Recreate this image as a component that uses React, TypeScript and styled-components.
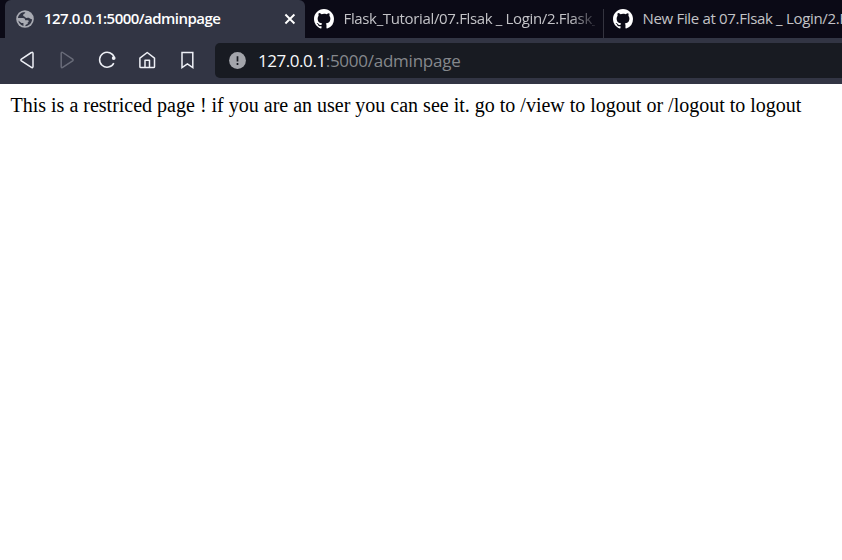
import React from "react";
import styled, { createGlobalStyle } from "styled-components";

const GlobalStyle = createGlobalStyle`
  * { box-sizing: border-box; }
  html, body { margin: 0; background: #fff; overflow: hidden; }
`;

const Browser = styled.div`
  width: 100%;
  height: 560px;
  display: flex;
  flex-direction: column;
  overflow: hidden;
  background: #fff;
  font-family: "Open Sans", "Noto Sans", sans-serif;
`;

const TabStrip = styled.div`
  display: flex;
  flex: 0 0 38px;
  padding-left: 5px;
  background: #0b0a16;
  overflow: hidden;
`;

const Tab = styled.div<{ $active?: boolean; $width: number }>`
  display: flex;
  align-items: center;
  flex: 0 0 ${(p) => p.$width}px;
  min-width: 0;
  padding: 0 8px 0 ${(p) => (p.$active ? 11 : 9)}px;
  background: ${(p) => (p.$active ? "#323544" : "transparent")};
  border-radius: 6px 6px 0 0;
`;

const TabTitle = styled.span<{ $active?: boolean; $fade?: boolean; $spacing: number }>`
  flex: 1;
  min-width: 0;
  margin-left: ${(p) => (p.$active ? 10 : 9.5)}px;
  padding-bottom: 2px;
  white-space: nowrap;
  font-size: 15px;
  line-height: 24px;
  font-weight: ${(p) => (p.$active ? 600 : 400)};
  letter-spacing: ${(p) => p.$spacing}px;
  color: ${(p) => (p.$active ? "#fff" : "#c3c3c7")};
  mask-image: ${(p) =>
    p.$fade ? "linear-gradient(to right, #000 calc(100% - 24px), transparent calc(100% + 4px))" : "none"};
`;

const TabDivider = styled.div`
  flex: 0 0 1px;
  margin-top: 9px;
  background: #34343f;
`;

const Toolbar = styled.div`
  display: flex;
  align-items: flex-start;
  flex: 0 0 46px;
  padding: 5px 0 0 17px;
  background: #323544;
`;

const NavButton = styled.button<{ $disabled?: boolean }>`
  display: flex;
  flex: 0 0 20px;
  height: 34px;
  margin: 0 20px 0 0;
  padding: 0;
  align-items: center;
  justify-content: center;
  border: 0;
  background: none;
  color: ${(p) => (p.$disabled ? "#696c79" : "#eef0f6")};
`;

const AddressBar = styled.div`
  display: flex;
  flex: 1;
  align-items: center;
  height: 35px;
  margin-left: -2px;
  padding-left: 14px;
  border-radius: 5px 0 0 5px;
  background: #181b22;
`;

const Address = styled.span`
  margin-left: 12px;
  white-space: nowrap;
  font-size: 17px;
  line-height: 26px;
  letter-spacing: -0.25px;
  color: #85888c;
`;

const Host = styled.span`
  color: #f7f8fa;
  letter-spacing: -0.45px;
`;

const PageText = styled.main`
  padding: 10px 10px 10px 10.5px;
  font-family: "Liberation Serif", serif;
  font-size: 20px;
  line-height: 23px;
  white-space: nowrap;
  color: #000;
`;

const Icon = styled.svg`
  display: block;
  flex: none;
`;

const GlobeIcon = () => (
  <Icon width="18" height="18" viewBox="0 0 18 18">
    <circle cx="9" cy="9" r="8.8" fill="#a9abb3" />
    <path
      d="M1.9 8.1 C2.3 5.3 4.2 3.1 7 2.3 C7.7 2.2 8.7 2.1 9.3 2.2 C9.2 3.8 7.1 3.5 7.1 5.2 C7.2 6.8 9 6.3 9.3 7.3 C9.6 8.8 12.2 7.4 13.2 7.9 C14.6 8.6 15 9.5 16.1 9.1 C16 13 13 16.1 9.5 16.2 L9.4 14.7 C12 14.4 11.9 13.4 11.9 12.3 L9.3 12.2 C8.6 10.5 8.8 9.5 7.4 9.3 L4.1 9.1 Z"
      fill="#323544"
    />
    <path d="M2.2 7.9h4.6c2 0 2.4 1.1 2.4 2.4h2.6c1.1 0 1.2 1.2.5 1.9l-1.5.4c0 2-1.1 2.2-2.2 2.2v1.8C4.7 16.4 2 13.4 1.8 9z" fill="#a9abb3" />
    <path d="M2.3 10.6 5.4 13h2l.1 3C4.8 15.5 2.8 13.5 2.3 10.6z" fill="#323544" />
  </Icon>
);

const GithubIcon = () => (
  <Icon width="20" height="20" viewBox="0 0 16 16" fill="#fff">
    <path d="M8 0C3.58 0 0 3.58 0 8c0 3.54 2.29 6.53 5.47 7.59.4.07.55-.17.55-.38 0-.19-.01-.82-.01-1.49-2.01.37-2.53-.49-2.69-.94-.09-.23-.48-.94-.82-1.13-.28-.15-.68-.52-.01-.53.63-.01 1.08.58 1.23.82.72 1.21 1.87.87 2.33.66.07-.52.28-.87.51-1.07-1.78-.2-3.64-.89-3.64-3.95 0-.87.31-1.59.82-2.15-.08-.2-.36-1.02.08-2.12 0 0 .67-.21 2.2.82A7.7 7.7 0 0 1 8 3.87c.68 0 1.36.09 2 .27 1.53-1.04 2.2-.82 2.2-.82.44 1.1.16 1.92.08 2.12.51.56.82 1.27.82 2.15 0 3.07-1.87 3.75-3.65 3.95.29.25.54.73.54 1.48 0 1.07-.01 1.93-.01 2.2 0 .21.15.46.55.38A8.01 8.01 0 0 0 16 8c0-4.42-3.58-8-8-8z" />
  </Icon>
);

const CloseIcon = () => (
  <Icon width="14" height="14" viewBox="0 0 14 14" stroke="#fff" strokeWidth="1.9">
    <path d="M2.4 2.5l9 9M11.4 2.5l-9 9" />
  </Icon>
);

const strokeProps = {
  width: 20,
  height: 20,
  viewBox: "0 0 20 20",
  fill: "none",
  stroke: "currentColor",
  strokeWidth: 1.5,
  strokeLinejoin: "round" as const,
};

const BackIcon = () => (
  <Icon {...strokeProps}>
    <path d="M14.4 2.5c.9-.6 1.6-.2 1.6.8v13.3c0 1-.8 1.4-1.6.8L4.4 10.9q-1-.9 0-1.8z" />
  </Icon>
);

const ForwardIcon = () => (
  <Icon {...strokeProps}>
    <path d="M5.7 2.5c-.8-.6-1.5-.2-1.5.8v13.3c0 1 .7 1.4 1.5.8l9.9-6.5q1-.9 0-1.8z" />
  </Icon>
);

const ReloadIcon = () => (
  <Icon {...strokeProps}>
    <path d="M17.3 7.6A7.5 7.5 0 1 0 16.8 13.1" />
    <circle cx="16.7" cy="8.1" r="1.9" fill="currentColor" stroke="none" />
  </Icon>
);

const HomeIcon = () => (
  <Icon {...strokeProps}>
    <path d="M2.9 8.1 10.2 2.5l7.3 5.6v8.6q0 .9-.9.9H3.8q-.9 0-.9-.9zM8 17.2v-6.9h4.5v6.9" />
  </Icon>
);

const BookmarkIcon = () => (
  <Icon {...strokeProps}>
    <path d="M5 2.4h10.8v15.1l-5.4-3.6L5 17.5z" strokeLinejoin="miter" />
  </Icon>
);

const InfoIcon = () => (
  <Icon width="17" height="17" viewBox="0 0 17 17">
    <circle cx="8.5" cy="8.5" r="8.4" fill="#a3a5ab" />
    <path d="M8.5 4.2v5.2M8.5 11v1.9" stroke="#181b22" strokeWidth="1.7" />
  </Icon>
);

export default function App() {
  return (
    <>
      <GlobalStyle />
      <Browser>
        <TabStrip>
          <Tab $active $width={300}>
            <GlobeIcon />
            <TabTitle $active $spacing={-0.53}>127.0.0.1:5000/adminpage</TabTitle>
            <CloseIcon />
          </Tab>
          <Tab $width={298}>
            <GithubIcon />
            <TabTitle $fade $spacing={-0.35}>Flask_Tutorial/07.Flsak _ Login/2.Flask_</TabTitle>
          </Tab>
          <TabDivider />
          <Tab $width={238}>
            <GithubIcon />
            <TabTitle $spacing={-0.32}>New File at 07.Flsak _ Login/2.F</TabTitle>
          </Tab>
        </TabStrip>
        <Toolbar>
          <NavButton aria-label="Back"><BackIcon /></NavButton>
          <NavButton aria-label="Forward" $disabled><ForwardIcon /></NavButton>
          <NavButton aria-label="Reload"><ReloadIcon /></NavButton>
          <NavButton aria-label="Home"><HomeIcon /></NavButton>
          <NavButton aria-label="Bookmark"><BookmarkIcon /></NavButton>
          <AddressBar>
            <InfoIcon />
            <Address><Host>127.0.0.1</Host>:5000/adminpage</Address>
          </AddressBar>
        </Toolbar>
        <PageText>This is a restriced page ! if you are an user you can see it. go to /view to logout or /logout to logout</PageText>
      </Browser>
    </>
  );
}
